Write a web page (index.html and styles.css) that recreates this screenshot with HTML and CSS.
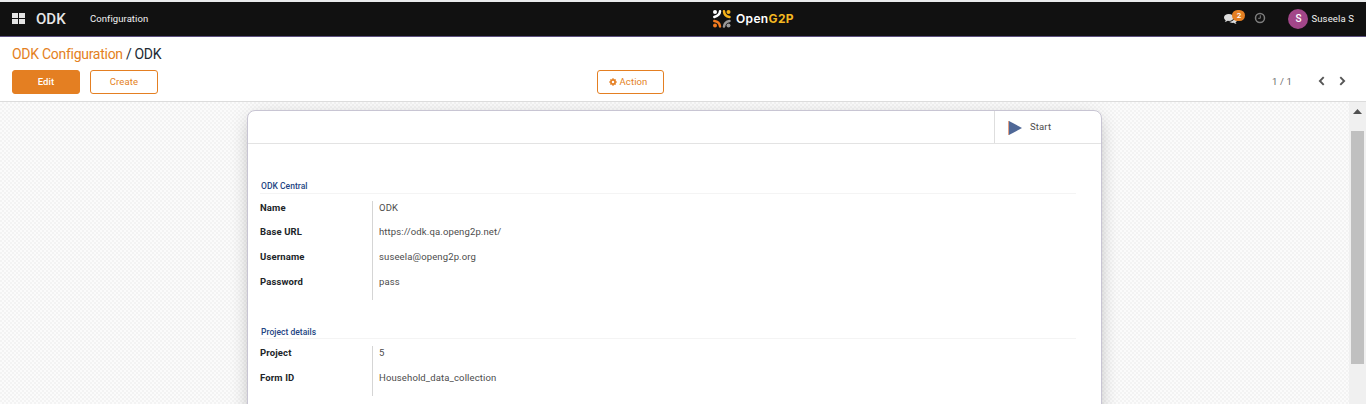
FILE: index.html
```html
<!DOCTYPE html>
<html lang="en">
<head>
<meta charset="utf-8">
<title>ODK</title>
<link rel="stylesheet" href="styles.css">
</head>
<body>
<header class="navbar">
  <div class="nav-left">
    <svg class="apps" width="13" height="11" viewBox="0 0 13 11" fill="#e4e4e4"><path d="M0 0h6v5H0zM7 0h6v5H7zM0 6h6v5H0zM7 6h6v5H7z"/></svg>
    <span class="brand">ODK</span>
    <span class="nav-item">Configuration</span>
  </div>
  <div class="logo">
    <svg width="20" height="20" viewBox="0 0 20 20" fill="none" stroke-width="2.5" stroke-linecap="round">
      <circle cx="3" cy="3" r="2" fill="#fff"/><circle cx="16.500" cy="3" r="2" fill="#f5b21a"/>
      <circle cx="3" cy="16.500" r="2" fill="#f47b20"/><circle cx="16.500" cy="16.500" r="2" fill="#999"/>
      <path stroke="#fff" d="M8 2.300Q7.800 6.500 2.300 8"/>
      <path stroke="#f5b21a" d="M12 2.300Q12.300 7 17.500 8"/>
      <path stroke="#f47b20" d="M2.300 12Q7.500 12.500 8 17.400"/>
      <path stroke="#999" d="M17.500 12Q12.500 12.800 12 17.600"/>
    </svg>
    <span class="logo-text">Open<b>G2P</b></span>
  </div>
  <div class="nav-right">
    <div class="chat">
      <svg width="13" height="12" viewBox="0 0 13 12" fill="#dedede"><path d="M4.800 1C2.100 1 0 2.500 0 4.500c0 1.100.7 2.100 1.700 2.700C1.500 7.900 1.100 8.400.7 8.900c1.200-.1 2.200-.6 3-1.100.4.1.7.1 1.100.1 2.700 0 4.900-1.500 4.900-3.400S7.500 1 4.800 1z"/><path d="M10.600 4.200c.1 2.600-2.400 4.500-5.600 4.600.9.700 2.100 1.100 3.500 1.100.4 0 .7 0 1-.1.9.6 1.800 1 3 1.100-.5-.5-.8-1-1-1.600 1-.6 1.500-1.400 1.500-2.400S12.100 4.800 10.600 4.200z"/></svg>
      <span class="badge">2</span>
    </div>
    <svg class="clock" width="12" height="12" viewBox="0 0 12 12" fill="none" stroke="#7d7d7d"><circle cx="6" cy="6" r="4.500" stroke-width="1.500"/><path d="M6.300 3.300v3H4.200"/></svg>
    <span class="avatar">S</span>
    <span class="user">Suseela S</span>
  </div>
</header>
<section class="panel">
  <div class="crumbs"><a>ODK Configuration</a> / ODK</div>
  <div class="toolbar">
    <div class="buttons"><button class="btn primary">Edit</button><button class="btn">Create</button></div>
    <button class="btn action"><svg width="8" height="8" viewBox="0 0 8 8"><circle cx="4" cy="4" r="2.100" fill="none" stroke="#e47f22" stroke-width="1.700"/><path stroke="#e47f22" stroke-width="1.400" d="M4 .3v1.200M4 6.500v1.200M.3 4h1.200M6.500 4h1.200M1.400 1.400l.8.8M5.800 5.800l.8.8M1.400 6.600l.8-.8M5.800 2.200l.8-.8"/></svg><span>Action</span></button>
    <div class="pager"><span>1 / 1</span>
      <svg width="7" height="10" viewBox="0 0 7 10"><path d="M5.700 1.200L1.900 5l3.800 3.800"/></svg>
      <svg width="7" height="10" viewBox="0 0 7 10"><path d="M1.300 1.200L5.100 5 1.300 8.800"/></svg>
    </div>
  </div>
</section>
<main class="content">
  <div class="backdrop">
    <article class="sheet">
      <div class="stat-row"><div class="stat"><svg width="14" height="14" viewBox="0 0 14 14"><path fill="#e5a184" d="M0 0h1v14H0z"/><path fill="#4f6897" d="M1 0l13 7-13 7z"/></svg><span>Start</span></div></div>
      <section class="group">
        <h2>ODK Central</h2>
        <dl class="central">
          <dt>Name</dt><dd>ODK</dd>
          <dt>Base URL</dt><dd>https://odk.qa.openg2p.net/</dd>
          <dt>Username</dt><dd>suseela@openg2p.org</dd>
          <dt>Password</dt><dd>pass</dd>
        </dl>
      </section>
      <section class="group second">
        <h2>Project details</h2>
        <dl>
          <dt>Project</dt><dd>5</dd>
          <dt>Form ID</dt><dd>Household_data_collection</dd>
        </dl>
      </section>
    </article>
  </div>
  <div class="scrollbar"><svg width="9" height="5" viewBox="0 0 9 5"><path fill="#505050" d="M4.500 0L9 5H0z"/></svg><div class="thumb"></div></div>
</main>
</body>
</html>
```
FILE: styles.css
```css
* { box-sizing: border-box; }
body { margin: 0; height: 404px; overflow: hidden; display: flex; flex-direction: column; background: #fff; font-family: Roboto, "Liberation Sans", sans-serif; font-size: 9.5px; letter-spacing: .13px; color: #4c4c4c; border-top: 2px solid #e9ebec; }
.navbar { height: 35px; flex: none; display: grid; grid-template-columns: 712px 84px 1fr; background: #111; border-bottom: 1px solid #5c5080; color: #e6e6e6; align-items: center; }
.nav-left { display: flex; align-items: center; padding-left: 12px; }
.apps { margin-top: -2px; }
.brand { font-size: 15px; font-weight: 500; letter-spacing: 0; margin-left: 11px; width: 54px; line-height: 34px; }
.nav-item { margin-top: -2px; letter-spacing: .07px; color: #f2f2f2; }
.logo { display: flex; align-items: center; gap: 4px; }
.logo svg { flex: none; }
.logo-text { font: 600 12px/20px Inter, sans-serif; color: #fff; letter-spacing: .35px; margin-top: -1px; }
.logo-text b { color: #f5b921; font-weight: 700; }
.nav-right { display: flex; align-items: center; justify-content: flex-end; padding-right: 12px; }
.chat { position: relative; width: 30px; height: 12px; margin-top: -1px; }
.badge { position: absolute; left: 8px; top: -3px; width: 13px; height: 11px; border-radius: 6px; background: #e47f22; color: #fff; font-size: 8px; font-weight: 500; line-height: 11px; text-align: center; }
.clock { margin-right: 22px; margin-top: -2px; }
.avatar { width: 20px; height: 20px; border-radius: 50%; background: #a24689; color: #fff; font-size: 10px; font-weight: 500; line-height: 20px; text-align: center; margin-right: 3px; }
.user { margin-top: -1px; color: #f2f2f2; }
.panel { height: 65px; flex: none; border-bottom: 1px solid #dcdcdc; padding: 8px 12px 0; }
.crumbs { font-size: 14px; letter-spacing: -.33px; line-height: 19px; color: #222b33; }
.crumbs a { color: #e47f22; letter-spacing: -.28px; }
.toolbar { display: grid; grid-template-columns: 585px 67px 1fr; margin-top: 6px; }
.buttons { display: flex; gap: 10px; }
.btn { width: 68px; height: 24px; padding: 0 0 1px; border: 1px solid #e47f22; border-radius: 3px; background: #fff; color: #e47f22; font: 9.5px Roboto, sans-serif; letter-spacing: .13px; }
.primary { background: #e47f22; color: #fff; font-weight: 500; }
.action { width: 67px; padding-right: 4px; display: flex; align-items: center; justify-content: center; gap: 2px; }
.pager { display: flex; align-items: center; justify-content: flex-end; padding-right: 3px; color: #6a6a6a; height: 22px; }
.pager span { margin-right: 26px; }
.pager svg { fill: none; stroke: #555; stroke-width: 1.900; margin-right: 14px; }
.pager svg:last-child { margin-right: 5px; }
.content { flex: 1; min-height: 0; display: flex; }
.backdrop { flex: 1; display: flex; justify-content: center; padding-top: 8px; overflow: hidden; background: repeating-conic-gradient(#f3f3f3 0 25%, #fbfbfb 0 50%) 0 0 / 4px 4px; }
.sheet { width: 855px; height: 340px; flex: none; background: #fff; border: 1px solid #c8c5d3; border-radius: 8px; box-shadow: 0 5px 20px -5px rgba(0,0,0,.35); }
.stat-row { height: 33px; border-bottom: 1px solid #e3e3e3; display: flex; justify-content: flex-end; }
.stat { width: 107px; border-left: 1px solid #dedede; display: flex; align-items: center; gap: 8px; padding-left: 13px; }
.stat svg { margin-top: 2px; }
.stat span { margin-top: -1px; }
.group { padding: 35px 25px 0 12px; }
h2 { margin: 0; height: 15px; border-bottom: 1px solid #f4f4f4; font-size: 8.500px; letter-spacing: .03px; line-height: 15px; font-weight: 500; color: #244583; padding-left: 1px; }
dl { margin: 7px 0 0; display: grid; grid-template-columns: 112px 1fr; grid-auto-rows: 25px; line-height: 14px; }
.central { grid-template-rows: 24px 25px 25px 25px; }
dt { font-weight: 700; color: #212529; }
dd { margin: 0; padding-left: 6px; border-left: 1px solid #d5d5d5; }
.second { padding-top: 24px; }
.second h2 { line-height: 16px; }
.scrollbar { width: 17px; background: #f0f0f0; display: flex; flex-direction: column; align-items: center; padding-top: 7px; }
.thumb { width: 13px; height: 233px; margin-top: 17px; background: #c0c0c0; }
```
